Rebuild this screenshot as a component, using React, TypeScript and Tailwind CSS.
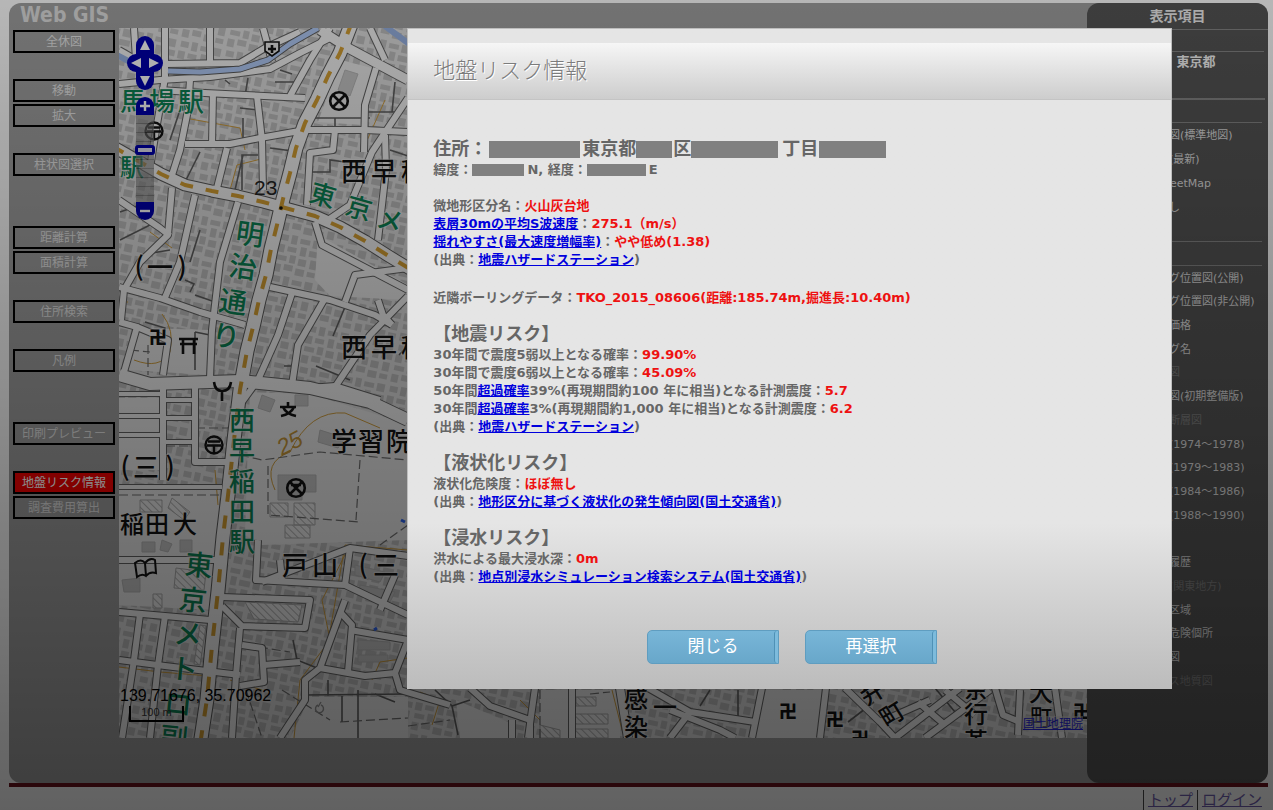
import { ReactNode } from 'react';

interface Road {
  d: string;
  w?: number;
}

interface PlaceLabel {
  text: string;
  x: number;
  y: number;
  size?: number;
  rotate?: number;
  green?: boolean;
}

interface LayerItem {
  name: string;
  disabled?: boolean;
}

const menuGroups = [
  ['全休図'],
  ['移動', '拡大'],
  ['柱状図選択'],
  ['距離計算', '面積計算'],
  ['住所検索'],
  ['凡例'],
  ['印刷プレビュー'],
  ['地盤リスク情報', '調査費用算出'],
];

// groups that start after a double gap
const wideGapBefore = [3, 6];

const baseLayers = ['地理院地図(標準地図)', '航空写真(最新)', 'OpenStreetMap', '背景図なし'];

const overlayLayers: (LayerItem | null)[] = [
  { name: 'ボーリング位置図(公開)' },
  { name: 'ボーリング位置図(非公開)' },
  { name: '地価公示価格' },
  { name: 'ボーリング名' },
  { name: '地盤分類図', disabled: true },
  { name: '土地条件図(初期整備版)' },
  { name: '都市圏活断層図', disabled: true },
  { name: '国土画像(1974～1978)' },
  { name: '国土画像(1979～1983)' },
  { name: '国土画像(1984～1986)' },
  { name: '国土画像(1988～1990)' },
  null,
  { name: '土地利用履歴' },
  { name: '地形分類(関東地方)', disabled: true },
  { name: '砂防指定区域' },
  { name: '土砂災害危険個所' },
  { name: '浸水想定図' },
  { name: 'シームレス地質図', disabled: true },
];

const roads: Road[] = [
  { d: 'M119 84L160 80L210 77L270 69L300 53L330 38' },
  { d: 'M119 50L140 62L165 64L240 63L265 48L300 32' },
  { d: 'M210 28V63' },
  { d: 'M263 28L268 46L272 62' },
  { d: 'M134 28L136 60' },
  { d: 'M165 28V78L156 130L150 168' },
  { d: 'M190 80L188 110L180 150L172 175' },
  { d: 'M213 92L212 145' },
  { d: 'M160 90L205 93L305 98' },
  { d: 'M185 144L230 144L260 138L305 130L365 130L408 132' },
  { d: 'M257 96L262 140L263 190' },
  { d: 'M227 148L217 188' },
  { d: 'M330 28L310 60L290 96' },
  { d: 'M408 98L372 152L350 205L325 222' },
  { d: 'M376 68L365 105L364 152' },
  { d: 'M335 130L333 150L310 153L307 205' },
  { d: 'M385 135L386 170L378 240' },
  { d: 'M320 30L348 48L408 80', w: 9 },
  { d: 'M370 28L385 60' },
  { d: 'M119 200L160 228L170 236' },
  { d: 'M172 188L168 235L140 262L124 290L121 320' },
  { d: 'M195 195L180 262L164 300' },
  { d: 'M238 202L220 262L212 330L210 378' },
  { d: 'M315 222L322 245L408 290' },
  { d: 'M119 287L160 298L200 312L245 325' },
  { d: 'M119 322L137 327L124 372' },
  { d: 'M137 327L168 340L163 375' },
  { d: 'M270 287L330 300L375 315L392 325' },
  { d: 'M324 300L298 345L292 385' },
  { d: 'M292 293L278 335L258 380L242 402' },
  { d: 'M345 302L355 275L408 268' },
  { d: 'M408 296L370 335L335 387' },
  { d: 'M392 325L383 315L378 300' },
  { d: 'M163 385V480' },
  { d: 'M119 394H163M119 416H163M119 435H163M163 400H195M163 418H195M163 442H195', w: 4 },
  { d: 'M195 388V462H228' },
  { d: 'M119 375L150 384L240 381L310 388L370 402L408 420', w: 12 },
  { d: 'M310 388L335 386L380 400' },
  { d: 'M119 487H222', w: 4 },
  { d: 'M119 560H218' },
  { d: 'M119 612L165 616L210 620' },
  { d: 'M140 614L134 660L122 738' },
  { d: 'M165 616L158 665L150 738' },
  { d: 'M119 660L165 666L240 675' },
  { d: 'M222 597L310 600L305 628L242 626L222 606' },
  { d: 'M240 628L236 675L232 738' },
  { d: 'M258 540L256 580L345 585L408 615' },
  { d: 'M262 582L350 548L408 556' },
  { d: 'M280 560L282 580' },
  { d: 'M350 548L345 585' },
  { d: 'M395 575L380 610' },
  { d: 'M345 600L320 668L305 680L305 700L280 738' },
  { d: 'M320 668L365 676L395 673L408 640' },
  { d: 'M340 612L352 625L348 672' },
  { d: 'M350 630L408 640M242 645L262 648L264 682L240 686' },
  { d: 'M395 673L400 690L450 705' },
  { d: 'M264 665L300 662' },
  { d: 'M470 688L490 706L530 720M512 720V738M530 720V738M535 688L528 738' },
  { d: 'M572 688V738' },
  { d: 'M620 688L628 738', w: 8 },
  { d: 'M648 688L690 712L755 722' },
  { d: 'M670 710L720 730L735 738M690 712L670 738' },
  { d: 'M762 688L752 738M826 688L820 738' },
  { d: 'M845 688L880 722L895 738' },
  { d: 'M895 738L960 688M925 738L990 690' },
  { d: 'M918 702L945 725M945 690L975 715' },
  { d: 'M880 722L930 700' },
  { d: 'M995 688L1003 715L1020 722' },
  { d: 'M1055 688L1062 738M1020 690L1018 735' },
];

const darkLines =
  'M225 80L230 84M248 78L245 96M310 118L370 118M335 118V130M368 112H398M395 82L392 112M310 172H330V160L345 162M200 152L186 180M243 118V145M243 155L235 190M258 155H242V190M120 240L150 225M145 322L165 328L163 340M195 332L215 336M195 332V370M284 366L294 366V384M345 307L333 336M316 366L350 380M399 355L408 345M195 295L215 302M185 280L194 284L190 292M293 640L297 660L317 668M305 695L408 694M342 696V722M375 694L395 702M328 680V696M358 690V738M435 690L452 706L458 735M452 706L470 700M710 690L700 706M738 690V716M848 722L874 702M935 688L955 712M240 108L258 110M270 148L300 152M390 150L408 156M280 70L292 74M275 82H300M180 110L170 140M140 205L120 212M170 250L140 255M200 230L190 262';

const dashedLines =
  'M166 418H190M166 446H190M196 428H228M240 455L262 460L320 452L408 460M268 466V515L360 522M360 460L356 520M119 495H222M130 350L150 352M148 345V375M246 645L290 652M282 690L330 720M408 525L380 545M256 580H280M246 690L262 738M340 722L408 718M408 726L450 720M540 690V738M590 694L610 692';

const contours =
  'M162 314Q175 330 170 352Q160 370 134 360M119 302H128M275 490Q262 462 290 452Q310 410 345 413L380 428M185 118L240 128L245 150M230 190L237 165L265 158M150 232L172 248M119 667L160 672L210 676M230 680L262 690M385 100L365 145M350 545L322 600L330 640L300 680L294 738M372 680L380 662L408 658M215 470L218 505M325 660L345 545L408 550M432 725L440 700L420 692M520 700L540 720M612 690L622 730';

const labels: PlaceLabel[] = [
  { text: '馬', x: 133, y: 101, green: true },
  { text: '場', x: 162, y: 101, green: true },
  { text: '駅', x: 191, y: 101, green: true },
  { text: '駅', x: 132, y: 167, size: 24, green: true },
  { text: '西', x: 354, y: 171 },
  { text: '早', x: 384, y: 171 },
  { text: '稲', x: 414, y: 171 },
  { text: '東', x: 323, y: 195, rotate: 16, green: true },
  { text: '京', x: 359, y: 208, rotate: 16, green: true },
  { text: 'メ', x: 390, y: 220, rotate: 16, green: true },
  { text: '明', x: 250, y: 234, size: 28, rotate: 8, green: true },
  { text: '治', x: 243, y: 267, size: 28, rotate: 8, green: true },
  { text: '通', x: 233, y: 302, size: 28, rotate: 8, green: true },
  { text: 'り', x: 226, y: 336, size: 28, rotate: 8, green: true },
  { text: '(', x: 139, y: 266 },
  { text: '一', x: 160, y: 267 },
  { text: ')', x: 182, y: 266 },
  { text: '西', x: 354, y: 347 },
  { text: '早', x: 384, y: 347 },
  { text: '稲', x: 414, y: 347 },
  { text: '西', x: 242, y: 420, green: true },
  { text: '早', x: 242, y: 450, green: true },
  { text: '稲', x: 242, y: 481, green: true },
  { text: '田', x: 242, y: 511, green: true },
  { text: '駅', x: 242, y: 541, green: true },
  { text: '学', x: 344, y: 441 },
  { text: '習', x: 371, y: 441 },
  { text: '院', x: 399, y: 441 },
  { text: '(', x: 125, y: 466 },
  { text: '三', x: 146, y: 467 },
  { text: ')', x: 170, y: 466 },
  { text: '稲', x: 132, y: 524, size: 24 },
  { text: '田', x: 157, y: 524, size: 24 },
  { text: '大', x: 185, y: 524, size: 24 },
  { text: '戸', x: 295, y: 565 },
  { text: '山', x: 325, y: 565 },
  { text: '(', x: 363, y: 564 },
  { text: '三', x: 386, y: 565 },
  { text: '東', x: 199, y: 565, size: 28, rotate: 6, green: true },
  { text: '京', x: 193, y: 600, size: 28, rotate: 6, green: true },
  { text: 'メ', x: 188, y: 634, size: 28, rotate: 6, green: true },
  { text: 'ト', x: 184, y: 669, size: 28, rotate: 6, green: true },
  { text: 'ロ', x: 178, y: 704, size: 28, rotate: 6, green: true },
  { text: '副', x: 174, y: 738, size: 28, rotate: 6, green: true },
  { text: '感', x: 636, y: 699, size: 24 },
  { text: '染', x: 636, y: 727, size: 24 },
  { text: '一', x: 665, y: 707, size: 24 },
  { text: '弁', x: 872, y: 692, size: 24, rotate: -32 },
  { text: '町', x: 892, y: 714, size: 24, rotate: -32 },
  { text: '奈', x: 976, y: 688, size: 24 },
  { text: '行', x: 976, y: 714, size: 24 },
  { text: '革', x: 976, y: 741, size: 24 },
  { text: '大', x: 1041, y: 692, size: 24 },
  { text: '町', x: 1041, y: 717, size: 22 },
  { text: '卍', x: 158, y: 337, size: 18 },
  { text: '卍', x: 788, y: 711, size: 18 },
  { text: '卍', x: 835, y: 719, size: 18 },
  { text: '卍', x: 860, y: 738, size: 18 },
  { text: '卍', x: 1082, y: 711, size: 18 },
];

const mainRoad =
  'M352 22L340 53L328 76L317 100L305 123L296 148L290 173L283 199L277 225L271 249L266 275L259 300L253 327L247 351L240 390L234 440L229 487L223 537L218 591L212 646L207 699L200 745';
const crossRoad =
  'M112 146L161 174L185 185L212 191L238 196L263 202L289 209L315 216L340 227L365 241L387 255L415 272';

function PostOffice({ x, y }: { x: number; y: number }) {
  return (
    <g transform={`translate(${x} ${y})`} fill="none" stroke="#111" strokeWidth="2.4">
      <circle r="8.5" />
      <path d="M-6 -3.5H6M-7 0.5H7M0 0.5V8" />
    </g>
  );
}

function MapCanvas() {
  return (
    <svg
      className="block h-full w-full"
      viewBox="119 28 968 710"
      preserveAspectRatio="xMinYMin slice"
      role="img"
      aria-label="地図"
    >
      <defs>
        <pattern id="houses" width="46" height="42" patternUnits="userSpaceOnUse" patternTransform="rotate(12)">
          <rect width="46" height="42" fill="#d2d2d2" />
          <path
            d="M2 2h8v6h-8zM13 1h6v9h-6zM22 3h10v5h-10zM35 2h8v8h-8zM1 12h7v8h-7zM11 13h9v5h-9zM24 11h6v9h-6zM33 13h11v6h-11zM2 23h10v5h-10zM15 21h6v8h-6zM24 23h8v7h-8zM36 22h7v9h-7zM1 32h7v8h-7zM11 31h9v6h-9zM23 33h9v7h-9zM35 34h8v5h-8z"
            fill="#b4b4b4"
          />
        </pattern>
        <pattern id="hatch" width="5" height="5" patternUnits="userSpaceOnUse" patternTransform="rotate(-45)">
          <rect width="5" height="5" fill="#dedede" />
          <path d="M0 0V5" stroke="#999" strokeWidth="1.6" />
        </pattern>
      </defs>

      <rect x="119" y="28" width="968" height="710" fill="url(#houses)" />

      {/* open ground: campus, parks, school yards */}
      <g fill="#dedede">
        <path d="M250 392L310 394L408 424V540L262 545L245 535L248 440Z" />
        <path d="M119 490H220L212 610L119 605Z" />
        <path d="M318 235L408 285V300L330 296L315 280Z" />
        <path d="M140 328L210 330V375L126 370Z" />
        <path d="M310 697H408V738H290Z" />
        <path d="M340 60L372 68L362 125L318 122Z" />
        <path d="M119 398H160V470H119Z" />
        <path d="M762 690H822V738H755Z" />
        <path d="M456 700L508 722V738H460Z" />
        <path d="M540 690H620V738H540Z" />
      </g>
      <g fill="url(#hatch)" stroke="#a0a0a0" strokeWidth="1">
        <path d="M245 602L302 605L298 622L254 619Z" />
        <path d="M140 500H162V512H140ZM172 498L190 512L184 520L168 508ZM270 503H288V517H270ZM294 503H315V525H294ZM285 525H310V538H285Z" />
        <path d="M176 568L206 572L204 590L174 588ZM153 594H162V608H153ZM200 625L206 626L200 665L194 664Z" />
        <path d="M576 697H596V706H576ZM575 714H608V724H575ZM575 729H608V738H575ZM540 725L560 730V738H540Z" />
      </g>
      <g fill="#bcbcbc" stroke="#adadad" strokeWidth="1">
        <path d="M278 475H316V492H302V500H278Z" />
        <path d="M320 430L345 438L338 448L318 442ZM262 395L275 400L270 412L258 408ZM295 395H308V406H295Z" />
        <path d="M345 70L358 74L350 96L338 90ZM122 580L140 578V592H124Z" />
        <path d="M142 542H155V552H142ZM162 540L172 544L168 552L160 550ZM180 540H192V552H180Z" />
        <path d="M355 565L385 572L380 582L355 575ZM360 585L395 592L390 602L358 596ZM358 640L390 642V650H358ZM358 655H388V662H358Z" />
      </g>

      <path d={contours} fill="none" stroke="#c3943a" strokeWidth="1" />
      <path d={darkLines} fill="none" stroke="#5a5a5a" strokeWidth="1.6" />
      <path d={dashedLines} fill="none" stroke="#6a6a6a" strokeWidth="1.2" strokeDasharray="9 4" />

      <g fill="none" strokeLinejoin="round">
        {roads.map((road) => (
          <path key={road.d} d={road.d} stroke="#5e5e5e" strokeWidth={(road.w || 6) + 2} />
        ))}
        <path d={mainRoad} stroke="#555" strokeWidth="15" />
        <path d={crossRoad} stroke="#555" strokeWidth="13" />
        {roads.map((road) => (
          <path key={road.d} d={road.d} stroke="#e6e6e6" strokeWidth={road.w || 6} />
        ))}

        {/* river */}
        <path d="M168 71L200 72L240 69L268 60L290 44L318 28" stroke="#555" strokeWidth="7" />
        <path d="M168 71L200 72L240 69L268 60L290 44L318 28" stroke="#a8c0ea" strokeWidth="5" />
        <path d="M385 26L412 46M115 54L134 64" stroke="#8fa8d6" strokeWidth="6" />

        <path d={mainRoad} stroke="#e6e6e6" strokeWidth="13" />
        <path d={crossRoad} stroke="#e6e6e6" strokeWidth="11" />
        <path d={mainRoad} stroke="#c89630" strokeWidth="4" strokeDasharray="13 14" />
        <path d={crossRoad} stroke="#c89630" strokeWidth="4" strokeDasharray="13 13" />
      </g>

      <g
        fontFamily="'Noto Sans CJK JP', sans-serif"
        fontWeight="500"
        textAnchor="middle"
        stroke="#e2e2e2"
        strokeOpacity="0.5"
        strokeWidth="2"
        paintOrder="stroke"
      >
        {labels.map((label) => (
          <text
            key={`${label.text}-${label.x}-${label.y}`}
            transform={`translate(${label.x} ${label.y}) rotate(${label.rotate || 0})`}
            dy="0.37em"
            fontSize={label.size || 26}
            fontWeight={label.text === '卍' ? 900 : 500}
            fill={label.green ? '#0b7b50' : '#101010'}
          >
            {label.text}
          </text>
        ))}
      </g>
      <text x="254" y="195" fontFamily="'Liberation Sans', sans-serif" fontSize="21" fill="#222">
        23
      </text>
      <text
        transform="translate(282 456) rotate(-28)"
        fontFamily="'Liberation Sans', sans-serif"
        fontStyle="italic"
        fontSize="23"
        fill="#b98d36"
      >
        25
      </text>
      <circle cx="281" cy="208" r="1.8" fill="#111" />
      <path d="M401 520l4 2M374 630l3 -2" stroke="#2b5fe0" strokeWidth="3" />

      {/* map symbols */}
      <g fill="none" stroke="#111" strokeWidth="2.6">
        <circle cx="339" cy="101" r="8.8" />
        <path d="M333 95L345 107M345 95L333 107" />
        <circle cx="296" cy="488" r="8.8" />
        <path d="M290 482L302 494M302 482L290 494M291 485H301" />
        <path d="M265 42H279V51L272 56L265 51Z" strokeWidth="1.6" fill="#ddd" />
        <path d="M268 49H276M272 45V53" />
        <path d="M179 339H198M180 344H197M183 339V354M194 339V354" />
        <path d="M214 382Q215 391 222 391Q230 391 231 382M222 391V401" />
        <path d="M280 407H296M288 402V407M294 407Q291 414 281 416M283 407Q286 414 296 416" />
        <path d="M135 563Q141 558 145 563Q150 557 155 560L156 573Q150 571 146 576Q142 573 137 577ZM145 563L146 576" strokeWidth="2" />
        <path d="M318 705a4 4 0 1 0 3 0M321 702l-3 5" stroke="#888" strokeWidth="1.4" />
      </g>
      <PostOffice x={154} y={131} />
      <PostOffice x={214} y={445} />
    </svg>
  );
}

interface PanButtonProps {
  label: string;
  path: string;
  shape: string;
}

function PanButton({ label, path, shape }: PanButtonProps) {
  return (
    <button type="button" aria-label={label} className={`h-[18px] w-[18px] bg-[#0000a4] ${shape}`}>
      <svg viewBox="0 0 18 18" className="h-[18px] w-[18px]">
        <path d={path} fill="#f2f2f2" />
      </svg>
    </button>
  );
}

function MapControls() {
  return (
    <div className="absolute top-2 left-2 flex w-9 flex-col items-center">
      <PanButton label="上へ" shape="rounded-t-full" path="M9 4L14 14H4Z" />
      <div className="flex">
        <PanButton label="左へ" shape="rounded-l-full" path="M4 9L14 4V14Z" />
        <PanButton label="右へ" shape="rounded-r-full" path="M14 9L4 4V14Z" />
      </div>
      <PanButton label="下へ" shape="rounded-b-full" path="M9 14L14 4H4Z" />
      <button type="button" aria-label="拡大表示" className="mt-[7px] h-[18px] w-[18px] rounded-t-full bg-[#0000a4]">
        <svg viewBox="0 0 18 18" className="h-[18px] w-[18px]">
          <path d="M4 9H14M9 4V14" stroke="#f2f2f2" strokeWidth="2.4" />
        </svg>
      </button>
      <div className="flex h-[87px] w-[18px] flex-col items-center bg-[repeating-linear-gradient(#77777799_0px,#77777799_8px,#44444499_8px,#44444499_9px)] pt-[30px]">
        <button
          type="button"
          aria-label="縮尺"
          className="h-[10px] w-5 shrink-0 rounded-[3px] border-[3px] border-[#0000a4] bg-[#d8d8e8]"
        />
      </div>
      <button type="button" aria-label="縮小表示" className="h-[18px] w-[18px] rounded-b-full bg-[#0000a4]">
        <svg viewBox="0 0 18 18" className="h-[18px] w-[18px]">
          <path d="M4 9H14" stroke="#f2f2f2" strokeWidth="2.4" />
        </svg>
      </button>
    </div>
  );
}

function SideMenu() {
  return (
    <nav className="flex w-[110px] shrink-0 flex-col px-1 pt-[2px]">
      {menuGroups.map((group, i) => (
        <div
          key={group[0]}
          className={`flex flex-col gap-[2px] ${i === 0 ? '' : wideGapBefore.includes(i) ? 'mt-[50px]' : 'mt-[26px]'}`}
        >
          {group.map((item) => (
            <button
              key={item}
              type="button"
              className={`h-[23px] w-full border-2 border-black text-xs leading-4 whitespace-nowrap ${
                item === '地盤リスク情報' ? 'bg-[#f00000] text-white' : 'text-[#dcdcdc]'
              }`}
            >
              {item}
            </button>
          ))}
        </div>
      ))}
    </nav>
  );
}

function LayerPanel() {
  return (
    <aside className="w-[181px] shrink-0 rounded-xl bg-[#515151] text-[11px] text-[#d6d6d6]">
      <h2 className="h-[26px] pt-[3px] text-center text-sm leading-5 font-bold text-[#e4e4e4]">表示項目</h2>
      <div className="h-[22px] border-t border-[#808080]" />
      <div className="mr-1 h-[47px] border-t border-[#808080] pt-[1px] pl-5 text-[13px] leading-[18px] font-bold text-[#ededed]">
        都道府県： 東京都
      </div>
      <h3 className="mr-[3px] h-[24px] border-t-2 border-[#808080] pl-5 leading-[22px]">背景地図</h3>
      <ul className="mr-[6px] h-[119px] border-t border-[#808080] pt-[1px]">
        {baseLayers.map((name, i) => (
          <li key={name} className="h-6">
            <label className="flex h-full items-center gap-[6px] pl-[19px] whitespace-nowrap">
              <input type="radio" name="base" defaultChecked={i === 0} className="m-0 h-[13px] w-[13px]" />
              {name}
            </label>
          </li>
        ))}
      </ul>
      <h3 className="mr-[6px] h-6 border-t border-[#808080] pl-5 leading-[22px]">重ね合わせ</h3>
      <ul className="mr-[6px] flex h-[429px] flex-col border-t border-[#808080] pt-[1px]">
        {overlayLayers.map((layer, i) => (
          <li key={layer ? layer.name : i} className="flex-1">
            {layer && (
              <label
                className={`flex h-full items-center gap-[6px] pl-[19px] whitespace-nowrap ${
                  layer.disabled ? 'text-[#7b7b7b]' : ''
                }`}
              >
                <input type="checkbox" disabled={layer.disabled} className="m-0 h-[13px] w-[13px]" />
                {layer.name}
              </label>
            )}
          </li>
        ))}
      </ul>
    </aside>
  );
}

function Mask({ className }: { className: string }) {
  return <span className={`inline-block shrink-0 bg-[#808080] ${className}`} />;
}

function Value({ children }: { children: ReactNode }) {
  return <span className="text-[#ee1111]">{children}</span>;
}

function Link({ children }: { children: ReactNode }) {
  return (
    <a href="#" className="text-[#0000dd] underline">
      {children}
    </a>
  );
}

function DialogButton({ children }: { children: ReactNode }) {
  return (
    <button
      type="button"
      className="flex h-[34px] w-[132px] rounded-l-[5px] border border-[#5f9dc0] bg-linear-to-b from-[#78b6d8] to-[#68a7ca] text-[17px] text-white"
    >
      <span className="flex h-full flex-1 items-center justify-center pl-1">{children}</span>
      <span className="h-full w-1 rounded-l-[3px] border-l border-[#4f91b6] bg-[#7dbbdc]" />
    </button>
  );
}

function RiskDialog() {
  return (
    <div
      role="dialog"
      aria-labelledby="risk-title"
      className="relative mt-7 ml-[32%] w-[60.1%] border border-[#bdbdbd] bg-linear-to-b from-[#e5e5e5] from-75% to-[#bcbcbc] pt-[14px] pb-6 text-[#666666]"
    >
      <h1
        id="risk-title"
        className="h-[57px] border-b border-[#c4c4c4] bg-linear-to-b from-[#f6f6f6] to-[#cdcdcd] pl-[25px] text-[22px] leading-[56px] font-light text-[#7c7c7c] [text-shadow:1px_1px_0_#fff]"
      >
        地盤リスク情報
      </h1>
      <div className="pt-[37px] pr-4 pl-[25px] text-[13px] leading-[18px] font-bold whitespace-nowrap">
        <p className="flex h-6 items-center text-lg leading-6">
          住所：
          <Mask className="mx-[2px] h-[17px] w-[91px]" />
          東京都
          <Mask className="mr-[1px] h-[17px] w-9" />
          区
          <Mask className="mr-1 h-[17px] w-[87px]" />
          丁目
          <Mask className="ml-[1px] h-[17px] w-[67px]" />
        </p>
        <p className="flex items-center">
          緯度：
          <Mask className="mr-[3px] h-3 w-[52px]" />
          N, 経度：
          <Mask className="mr-[3px] h-3 w-[59px]" />E
        </p>

        <div className="mt-[18px]">
          <p>微地形区分名：<Value>火山灰台地</Value></p>
          <p><Link>表層30mの平均S波速度</Link>：<Value>275.1（m/s）</Value></p>
          <p><Link>揺れやすさ(最大速度増幅率)</Link>：<Value>やや低め(1.38)</Value></p>
          <p>(出典：<Link>地震ハザードステーション</Link>)</p>
        </div>

        <p className="mt-5">近隣ボーリングデータ：<Value>TKO_2015_08606(距離:185.74m,掘進長:10.40m)</Value></p>

        <section className="mt-[15px]">
          <h2 className="text-lg leading-6">【地震リスク】</h2>
          <p>30年間で震度5弱以上となる確率：<Value>99.90%</Value></p>
          <p>30年間で震度6弱以上となる確率：<Value>45.09%</Value></p>
          <p>50年間<Link>超過確率</Link>39%(再現期間約100 年に相当)となる計測震度：<Value>5.7</Value></p>
          <p>30年間<Link>超過確率</Link>3%(再現期間約1,000 年に相当)となる計測震度：<Value>6.2</Value></p>
          <p>(出典：<Link>地震ハザードステーション</Link>)</p>
        </section>

        <section className="mt-[15px]">
          <h2 className="text-lg leading-6">【液状化リスク】</h2>
          <p>液状化危険度：<Value>ほぼ無し</Value></p>
          <p>(出典：<Link>地形区分に基づく液状化の発生傾向図(国土交通省)</Link>)</p>
        </section>

        <section className="mt-[15px]">
          <h2 className="text-lg leading-6">【浸水リスク】</h2>
          <p>洪水による最大浸水深：<Value>0m</Value></p>
          <p>(出典：<Link>地点別浸水シミュレーション検索システム(国土交通省)</Link>)</p>
        </section>
      </div>
      <div className="mt-11 flex justify-center gap-[26px] pl-1">
        <DialogButton>閉じる</DialogButton>
        <DialogButton>再選択</DialogButton>
      </div>
    </div>
  );
}

export default function App() {
  return (
    <div className="relative min-h-screen overflow-hidden bg-[#f3f3f3] pt-[3px] font-['DejaVu_Sans','Noto_Sans_CJK_JP',sans-serif]">
      <div className="mr-[5px] ml-[9px]">
        <div className="flex rounded-xl bg-[#989898]">
          <div className="min-w-0 flex-1 pb-[45px]">
            <header className="h-[25px] pl-[11px] font-['DejaVu_Sans_Condensed','DejaVu_Sans',sans-serif] text-[21px] leading-[25px] font-bold text-[#d4d4d4]">
              Web GIS
            </header>
            <div className="flex">
              <SideMenu />
              <div className="relative h-[710px] min-w-0 flex-1 overflow-hidden">
                <MapCanvas />
                <MapControls />
                <div className="absolute bottom-4 left-0 font-['Liberation_Sans',sans-serif] text-black">
                  <p className="pl-[1px] text-base leading-5">139.71676, 35.70962</p>
                  <p className="ml-[10px] h-4 w-[55px] border-2 border-t-0 border-black text-center text-[11px] leading-3 text-[#333]">
                    100 m
                  </p>
                </div>
                <a
                  href="#"
                  className="absolute right-1 bottom-[6px] bg-[#cccccc80] text-xs leading-4 text-[#2222cc] underline"
                >
                  国土地理院
                </a>
              </div>
            </div>
          </div>
          <LayerPanel />
        </div>
        <footer className="flex justify-end border-t-4 border-[#65101a] pt-[3px] text-[15px] leading-5">
          <a href="#" className="border-l border-[#444] px-1 text-[#6b5aa8] underline">トップ</a>
          <a href="#" className="border-l border-[#444] pr-[6px] pl-1 text-[#6b5aa8] underline">ログイン</a>
        </footer>
      </div>

      <div className="absolute inset-0 bg-linear-to-b from-black/25 to-black/60">
        <RiskDialog />
      </div>
    </div>
  );
}
